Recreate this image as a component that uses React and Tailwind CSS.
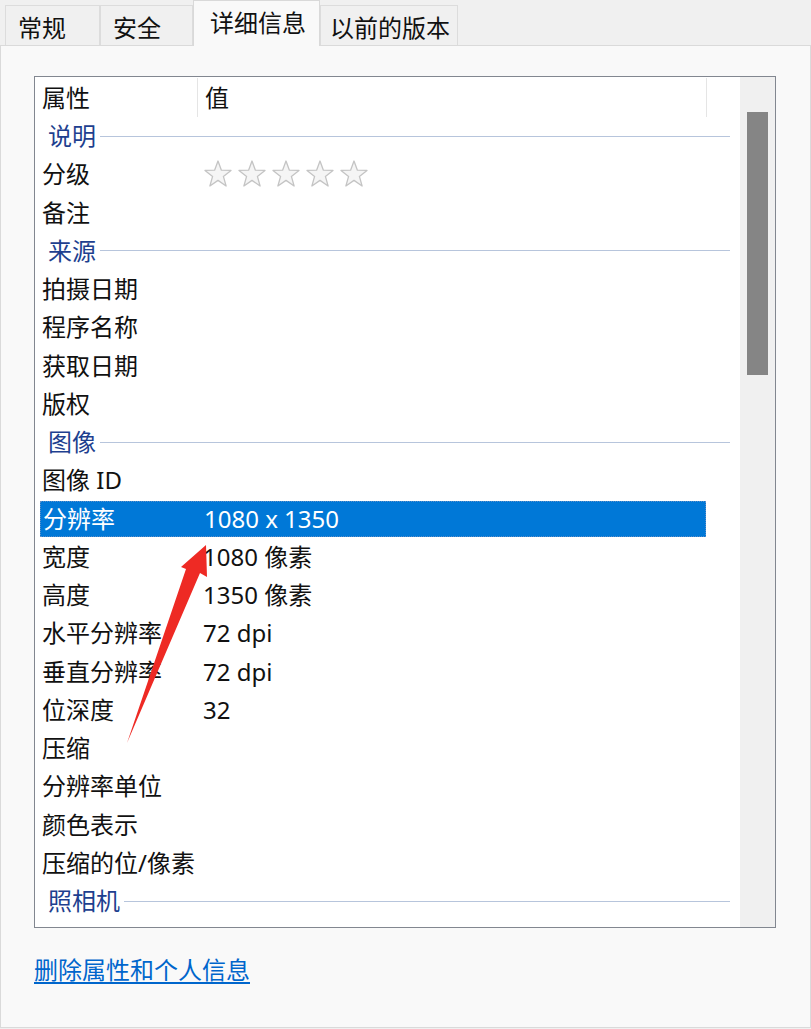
import React from "react";

const rows = [
  { type: "section", label: "说明" },
  { label: "分级", stars: true },
  { label: "备注" },
  { type: "section", label: "来源" },
  { label: "拍摄日期" },
  { label: "程序名称" },
  { label: "获取日期" },
  { label: "版权" },
  { type: "section", label: "图像" },
  { label: "图像 ID" },
  { label: "分辨率", value: "1080 x 1350", selected: true },
  { label: "宽度", value: "1080 像素" },
  { label: "高度", value: "1350 像素" },
  { label: "水平分辨率", value: "72 dpi" },
  { label: "垂直分辨率", value: "72 dpi" },
  { label: "位深度", value: "32" },
  { label: "压缩" },
  { label: "分辨率单位" },
  { label: "颜色表示" },
  { label: "压缩的位/像素" },
  { type: "section", label: "照相机" },
];

function Star() {
  return (
    <svg width="30" height="30" viewBox="0 0 30 30">
      <polygon
        points="15,2 18.4,11.2 28,11.4 20.4,17.4 23.1,27 15,21.4 6.9,27 9.6,17.4 2,11.4 11.6,11.2"
        fill="#f5f5f5"
        stroke="#c4c4c4"
        strokeWidth="1.3"
        strokeLinejoin="round"
      />
    </svg>
  );
}

function Tab({ label, active, pad = "pl-[12px]" }) {
  if (active) {
    return (
      <div className="relative z-10 -mb-px h-[46px] w-[127px] border-x border-t border-[#d9d9d9] bg-[#f9f9f9] pl-[16px] pt-[10px]">
        {label}
      </div>
    );
  }
  return (
    <div className={"mt-[5px] h-[40px] whitespace-nowrap border-x border-t border-[#dcdcdc] bg-[#f0f0f0] pt-[10px] " + pad}>
      {label}
    </div>
  );
}

export default function App() {
  return (
    <div
      className="h-[1029px] w-[811px] bg-[#f0f0f0] text-[24px] leading-none text-[#111]"
      style={{ fontFamily: '"Noto Sans", "Noto Sans CJK SC", sans-serif' }}
    >
      {/* tabs */}
      <div className="flex h-[45px] pl-[5px]">
        <div className="w-[95px]">
          <Tab label="常规" />
        </div>
        <div className="w-[93px]">
          <Tab label="安全" />
        </div>
        <Tab label="详细信息" active />
        <div className="w-[138px]">
          <Tab label="以前的版本" pad="pl-[9px]" />
        </div>
      </div>

      {/* panel */}
      <div className="relative h-[983px] border border-[#dadada] bg-[#f9f9f9] pl-[33px] pr-[34px] pt-[30px]">
        <div className="flex h-[852px] border border-[#828790] bg-white">
          <div className="flex-1 overflow-hidden pl-[5px] pt-px">
            {/* header */}
            <div className="flex h-[39px] items-center">
              <div className="flex h-full w-[158px] items-center border-r border-[#e5e5e5] pl-[2px]">属性</div>
              <div className="flex h-full w-[509px] items-center border-r border-[#e5e5e5] pl-[7px]">值</div>
            </div>
            {rows.map((r, i) =>
              r.type === "section" ? (
                <div key={i} className="flex h-[38.25px] items-center pl-[8px] pr-[10px]">
                  <span className="text-[#1e3f8f]">{r.label}</span>
                  <div className="ml-[4px] h-px flex-1 bg-[#b7c5dc]" />
                </div>
              ) : (
                <div key={i} className="flex h-[38.25px] items-center">
                  <div
                    className={
                      "flex h-[36px] w-[666px] items-center " +
                      (r.selected ? "border border-dotted border-[#5c8fc9] bg-[#0078d7] text-white" : "")
                    }
                  >
                    <div className="w-[163px] whitespace-nowrap pl-[2px]">{r.label}</div>
                    <div className="flex items-center whitespace-nowrap">
                      {r.stars ? (
                        <div className="flex gap-[4px]">
                          <Star />
                          <Star />
                          <Star />
                          <Star />
                          <Star />
                        </div>
                      ) : (
                        r.value
                      )}
                    </div>
                  </div>
                </div>
              )
            )}
          </div>
          {/* scrollbar */}
          <div className="w-[35px] bg-[#f0f0f0] px-[7px] pt-[35px]">
            <div className="h-[263px] bg-[#858585]" />
          </div>
        </div>

        <div className="mt-[30px]">
          <a href="#" className="text-[#0066cc] underline underline-offset-[3px]">
            删除属性和个人信息
          </a>
        </div>

        {/* red arrow annotation */}
        <svg
          className="pointer-events-none absolute left-0 top-0"
          width="811"
          height="983"
          viewBox="0 0 811 983"
        >
          <path d="M126 697 L185 523 L180 521 L205 499 L206 531 L199 527 Z" fill="#ee2a24" />
        </svg>
      </div>
    </div>
  );
}
